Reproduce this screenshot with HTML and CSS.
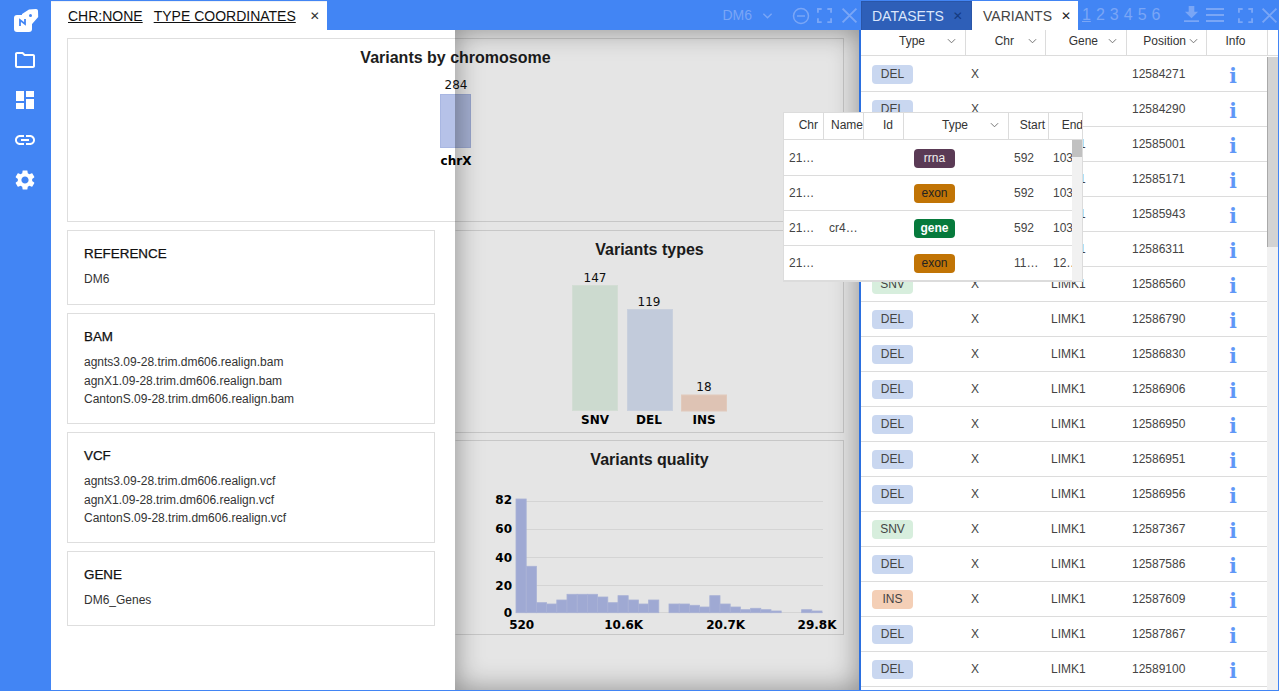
FILE: index.html
```html
<!DOCTYPE html>
<html lang="en">
<head>
<meta charset="utf-8">
<title>Variants</title>
<link rel="stylesheet" href="styles.css">
</head>
<body>
<div class="app">
  <nav class="sidebar">
    <svg class="logo" viewBox="0 0 26 26"><rect x="1" y="7" width="18" height="17" rx="3" fill="#fff"/><path fill="#fff" d="M9 6 16 1.500 23 1c1.200 0 2 .8 2 2l.2 6-7 8H8z"/><path fill="none" stroke="#4285f4" stroke-width="1.800" d="M7 18v-6l5 4v-5"/><circle cx="17.500" cy="7.500" r="1.500" fill="#4285f4"/></svg>
    <svg class="nav-icon" viewBox="0 0 24 24"><path d="M9.170 6l2 2H20v10H4V6h5.170M10 4H4c-1.100 0-1.990.9-1.990 2L2 18c0 1.100.9 2 2 2h16c1.100 0 2-.9 2-2V8c0-1.100-.9-2-2-2h-8l-2-2z"/></svg>
    <svg class="nav-icon" viewBox="0 0 24 24"><path d="M3 13h8V3H3v10zm0 8h8v-6H3v6zm10 0h8V11h-8v10zm0-18v6h8V3h-8z"/></svg>
    <svg class="nav-icon" viewBox="0 0 24 24"><path d="M3.900 12c0-1.710 1.390-3.100 3.100-3.100h4V7H7c-2.760 0-5 2.240-5 5s2.240 5 5 5h4v-1.900H7c-1.710 0-3.100-1.390-3.100-3.100zM8 13h8v-2H8v2zm9-6h-4v1.900h4c1.710 0 3.100 1.390 3.100 3.100s-1.390 3.100-3.100 3.100h-4V17h4c2.760 0 5-2.240 5-5s-2.240-5-5-5z"/></svg>
    <svg class="nav-icon" viewBox="0 0 24 24"><path d="M19.140 12.940c.04-.3.06-.61.06-.94 0-.32-.02-.64-.07-.94l2.030-1.580c.18-.14.23-.41.12-.61l-1.920-3.320c-.12-.22-.37-.29-.59-.22l-2.390.96c-.5-.38-1.030-.7-1.620-.94l-.36-2.540c-.04-.24-.24-.41-.48-.41h-3.840c-.24 0-.43.17-.47.41l-.36 2.540c-.59.24-1.130.57-1.620.94l-2.390-.96c-.22-.08-.47 0-.59.22L2.740 8.870c-.12.21-.08.47.12.61l2.030 1.580c-.05.3-.09.63-.09.94s.02.64.07.94l-2.030 1.580c-.18.14-.23.41-.12.61l1.920 3.320c.12.22.37.29.59.22l2.390-.96c.5.38 1.030.7 1.620.94l.36 2.540c.05.24.24.41.48.41h3.840c.24 0 .44-.17.47-.41l.36-2.540c.59-.24 1.130-.56 1.620-.94l2.390.96c.22.08.47 0 .59-.22l1.920-3.320c.12-.22.07-.47-.12-.61l-2.010-1.580zM12 15.600c-1.980 0-3.600-1.620-3.600-3.600s1.620-3.600 3.600-3.600 3.600 1.620 3.600 3.600-1.620 3.600-3.600 3.600z"/></svg>
  </nav>

  <section class="left-panel">
    <header class="panel-head">
      <div class="coord-tab">
        <span class="coord-link">CHR:NONE</span>
        <span class="coord-link">TYPE COORDINATES</span>
        <span class="tab-x">&#10005;</span>
      </div>
      <div class="head-tools">
        <span class="ref-name">DM6</span>
        <svg class="chev-light" viewBox="0 0 12 8"><path d="M1.500 1.500 6 6l4.500-4.500"/></svg>
        <svg class="tool tool-minus" viewBox="0 0 20 20"><circle cx="10" cy="10" r="7.500"/><path d="M6 10h8"/></svg>
        <svg class="tool tool-full" viewBox="0 0 16 16"><path d="M1 5V1h4M11 1h4v4M15 11v4h-4M5 15H1v-4"/></svg>
        <svg class="tool tool-close" viewBox="0 0 16 16"><path d="M1.500 1.500l13 13M14.500 1.500l-13 13"/></svg>
      </div>
    </header>
    <div class="left-body">
      <div class="chart-card chart-chrom">
        <h2 class="chart-title">Variants by chromosome</h2>
        <svg class="chart-svg chart-svg-chrom" viewBox="0 0 776 130">
          <text class="val" x="388" y="21">284</text>
          <rect x="372.500" y="26.500" width="30" height="53" fill="#b6c2e8" stroke="#a9b7e2"/>
          <text class="lab" x="388" y="97">chrX</text>
        </svg>
      </div>
      <div class="chart-card chart-types">
        <h2 class="chart-title">Variants types</h2>
        <svg class="chart-svg chart-svg-types" viewBox="0 0 387 155">
          <text class="val" x="139" y="13">147</text>
          <rect x="116.500" y="16.500" width="45" height="125" fill="#e4f3e7" stroke="#ebf7ed"/>
          <text class="val" x="193" y="37">119</text>
          <rect x="171.500" y="40.500" width="45" height="101" fill="#d9e2f4" stroke="#e0e8f7"/>
          <text class="val" x="248" y="122">18</text>
          <rect x="225.500" y="126" width="45" height="16" fill="#f8dac9" stroke="#fbe1d2"/>
          <text class="lab" x="139" y="155">SNV</text>
          <text class="lab" x="193" y="155">DEL</text>
          <text class="lab" x="248" y="155">INS</text>
        </svg>
      </div>
      <div class="chart-card chart-quality">
        <h2 class="chart-title">Variants quality</h2>
        <svg class="chart-svg chart-svg-quality" viewBox="0 0 387 163">
          <path class="grid" d="M60 31.500H367M60 59.500H367M60 87.500H367M60 115.500H367M60 142.500H367"/>
          <g class="hist">
            <rect x="60" y="29" width="10.200" height="113.700"/><rect x="70.200" y="96.300" width="10.200" height="46.400"/>
            <rect x="80.400" y="132.700" width="10.200" height="10"/><rect x="90.600" y="134" width="10.200" height="8.700"/>
            <rect x="100.800" y="130" width="10.200" height="12.700"/><rect x="111" y="124.300" width="10.200" height="18.400"/>
            <rect x="121.200" y="124.300" width="10.200" height="18.400"/><rect x="131.400" y="124.300" width="10.200" height="18.400"/>
            <rect x="141.600" y="127" width="10.200" height="15.700"/><rect x="151.800" y="132.700" width="10.200" height="10"/>
            <rect x="162" y="125.700" width="10.200" height="17"/><rect x="172.200" y="130" width="10.200" height="12.700"/>
            <rect x="182.400" y="134" width="10.200" height="8.700"/><rect x="192.600" y="130" width="10.200" height="12.700"/>
            <rect x="213" y="134" width="10.200" height="8.700"/><rect x="223.200" y="134" width="10.200" height="8.700"/>
            <rect x="233.400" y="135.300" width="10.200" height="7.400"/><rect x="243.600" y="137" width="10.200" height="5.700"/>
            <rect x="253.800" y="125.700" width="10.200" height="17"/><rect x="264" y="134" width="10.200" height="8.700"/>
            <rect x="274.200" y="137" width="10.200" height="5.700"/><rect x="284.400" y="139.700" width="10.200" height="3"/>
            <rect x="294.600" y="138.300" width="10.200" height="4.400"/><rect x="304.800" y="139.700" width="10.200" height="3"/>
            <rect x="315" y="141" width="10.200" height="1.700"/><rect x="345.600" y="139.700" width="10.200" height="3"/>
            <rect x="355.800" y="141" width="10.200" height="1.700"/>
          </g>
          <text class="lab lab-y" x="56" y="33.500">82</text>
          <text class="lab lab-y" x="56" y="63">60</text>
          <text class="lab lab-y" x="56" y="91.500">40</text>
          <text class="lab lab-y" x="56" y="119.500">20</text>
          <text class="lab lab-y" x="56" y="146.500">0</text>
          <text class="lab" x="65.700" y="159">520</text>
          <text class="lab" x="167.700" y="159">10.6K</text>
          <text class="lab" x="269.700" y="159">20.7K</text>
          <text class="lab" x="361" y="159">29.8K</text>
        </svg>
      </div>
      <div class="dim"></div>
      <aside class="drawer">
        <div class="info-card info-ref"><h3>REFERENCE</h3><p>DM6</p></div>
        <div class="info-card"><h3>BAM</h3><p>agnts3.09-28.trim.dm606.realign.bam</p><p>agnX1.09-28.trim.dm606.realign.bam</p><p>CantonS.09-28.trim.dm606.realign.bam</p></div>
        <div class="info-card"><h3>VCF</h3><p>agnts3.09-28.trim.dm606.realign.vcf</p><p>agnX1.09-28.trim.dm606.realign.vcf</p><p>CantonS.09-28.trim.dm606.realign.vcf</p></div>
        <div class="info-card info-ref"><h3>GENE</h3><p>DM6_Genes</p></div>
      </aside>
    </div>
  </section>

  <section class="right-panel">
    <header class="panel-head right-head">
      <div class="r-tab r-tab-dark">DATASETS <span class="tab-x">&#10005;</span></div>
      <div class="r-tab r-tab-white">VARIANTS <span class="tab-x">&#10005;</span></div>
      <div class="pages"><u>1</u><span>2</span><span>3</span><span>4</span><span>5</span><span>6</span></div>
      <svg class="tool tool-down" viewBox="0 0 16 18"><path class="solid" d="M5 0h6v6h4l-7 7-7-7h4zM0 15h16v2H0z"/></svg>
      <svg class="tool tool-menu" viewBox="0 0 18 14"><path class="solid" d="M0 0h18v2H0zM0 6h18v2H0zM0 12h18v2H0z"/></svg>
      <svg class="tool tool-full tool-full-r" viewBox="0 0 16 16"><path d="M1 5V1h4M11 1h4v4M15 11v4h-4M5 15H1v-4"/></svg>
      <svg class="tool tool-close tool-close-r" viewBox="0 0 16 16"><path d="M1.500 1.500l13 13M14.500 1.500l-13 13"/></svg>
    </header>
    <div class="table-wrap">
      <div class="vt-head">
        <div class="vc vc-type">Type<svg class="chev" viewBox="0 0 10 6"><path d="M1 1l4 4 4-4"/></svg></div>
        <div class="vc vc-chr">Chr<svg class="chev" viewBox="0 0 10 6"><path d="M1 1l4 4 4-4"/></svg></div>
        <div class="vc vc-gene">Gene<svg class="chev" viewBox="0 0 10 6"><path d="M1 1l4 4 4-4"/></svg></div>
        <div class="vc vc-pos">Position<svg class="chev" viewBox="0 0 10 6"><path d="M1 1l4 4 4-4"/></svg></div>
        <div class="vc vc-info">Info</div>
      </div>
      <div class="vt-body">
        <div class="vt-rows" id="rows"></div>
        <div class="v-scroll"><div class="v-thumb"></div></div>
      </div>
    </div>
  </section>

  <div class="popup">
    <div class="pt-head">
      <div class="pc pc-n">Chr</div><div class="pc pc-n pc-name">Name</div><div class="pc pc-n pc-id">Id</div>
      <div class="pc pc-type">Type<svg class="chev" viewBox="0 0 10 6"><path d="M1 1l4 4 4-4"/></svg></div>
      <div class="pc pc-n pc-start">Start</div><div class="pc pc-n pc-end">End</div>
    </div>
    <div class="pt-row"><span class="pd pd-chr">21…</span><span class="pd pd-name"></span><span class="pd pd-id"></span><span class="pd pd-type"><b class="ft ft-rrna">rrna</b></span><span class="pd pd-start">592</span><span class="pd pd-end">103</span></div>
    <div class="pt-row"><span class="pd pd-chr">21…</span><span class="pd pd-name"></span><span class="pd pd-id"></span><span class="pd pd-type"><b class="ft ft-exon">exon</b></span><span class="pd pd-start">592</span><span class="pd pd-end">103</span></div>
    <div class="pt-row"><span class="pd pd-chr">21…</span><span class="pd pd-name">cr4…</span><span class="pd pd-id"></span><span class="pd pd-type"><b class="ft ft-gene">gene</b></span><span class="pd pd-start">592</span><span class="pd pd-end">103</span></div>
    <div class="pt-row"><span class="pd pd-chr">21…</span><span class="pd pd-name"></span><span class="pd pd-id"></span><span class="pd pd-type"><b class="ft ft-exon">exon</b></span><span class="pd pd-start">11…</span><span class="pd pd-end">12…</span></div>
    <div class="p-scroll"><div class="p-thumb"></div></div>
  </div>
</div>
<script src="app.js"></script>
</body>
</html>
```

FILE: app.js
```js
var data = [
  ["DEL","",12584271],["DEL","",12584290],["DEL","LIMK1",12585001],["DEL","LIMK1",12585171],
  ["DEL","LIMK1",12585943],["DEL","LIMK1",12586311],["SNV","LIMK1",12586560],["DEL","LIMK1",12586790],
  ["DEL","LIMK1",12586830],["DEL","LIMK1",12586906],["DEL","LIMK1",12586950],["DEL","LIMK1",12586951],
  ["DEL","LIMK1",12586956],["SNV","LIMK1",12587367],["DEL","LIMK1",12587586],["INS","LIMK1",12587609],
  ["DEL","LIMK1",12587867],["DEL","LIMK1",12589100]
];
document.getElementById("rows").innerHTML = data.map(function (r) {
  return '<div class="vt-row"><span class="vd vd-type"><b class="vb vb-' + r[0].toLowerCase() + '">' + r[0] +
    '</b></span><span class="vd vd-chr">X</span><span class="vd vd-gene">' + r[1] +
    '</span><span class="vd vd-pos">' + r[2] + '</span><span class="vd vd-info">i</span></div>';
}).join("");
```

FILE: styles.css
```css
* { box-sizing: border-box; }
html, body { margin: 0; padding: 0; height: 100%; overflow: hidden; }
body { background: #4285f4; font-family: "Liberation Sans", Arial, sans-serif; color: #222; }

.app { position: relative; display: flex; width: 1279px; height: 691px; background: #4285f4; overflow: hidden; padding-bottom: 1px; }

.sidebar { width: 51px; flex: none; display: flex; flex-direction: column; align-items: center; padding: 8px 1px 0 0; gap: 16px; }
.logo { width: 26px; height: 26px; margin-left: 1px; margin-bottom: -2px; }
.nav-icon { width: 24px; height: 24px; fill: #fff; }

.panel-head { height: 30px; flex: none; display: flex; align-items: stretch; background: #4285f4; }

.left-panel { width: 808px; flex: none; display: flex; flex-direction: column; }
.coord-tab { width: 276px; margin-top: 1px; background: #fff; border-top: 1px solid #eef1f6; display: flex; align-items: center; padding: 0 0 0 17px; font-size: 14px; color: #111; white-space: nowrap; }
.coord-link { text-decoration: underline; margin-right: 11px; }
.tab-x { font-size: 12px; color: #333; font-family: "DejaVu Sans", sans-serif; }
.coord-tab .tab-x { margin-left: 3px; }
.head-tools { flex: 1; display: flex; align-items: center; justify-content: flex-end; padding-right: 1px; color: #7aa6f6; }
.ref-name { font-size: 14px; color: #7aa6f6; margin-right: 10px; }
.chev-light { width: 11px; height: 8px; fill: none; stroke: #7aa6f6; stroke-width: 1.500; margin-right: 18px; margin-top: 2px; }
.tool { fill: none; stroke: #7aa6f6; }
.tool-minus { width: 20px; height: 20px; stroke-width: 1.500; margin-right: 6px; margin-top: 2px; }
.tool-full { width: 15px; height: 15px; stroke-width: 2; margin-right: 9px; }
.tool-close { width: 17px; height: 17px; stroke-width: 1.800; }
.solid { fill: #7aa6f6; stroke: none; }

.left-body { position: relative; flex: 1; background: #fff; padding: 8px 15px 0 16px; display: flex; flex-direction: column; overflow: hidden; }
.chart-card { position: relative; background: #fff; border: 1px solid #dedede; flex: none; }
.chart-chrom { height: 184px; margin-bottom: 8px; }
.chart-types { height: 203px; margin-bottom: 7px; margin-left: 388px; border-left-color: transparent; }
.chart-quality { height: 195px; margin-left: 388px; border-left-color: transparent; }
.chart-title { margin: 0; font-size: 16px; font-weight: 700; text-align: center; color: #1d1d1d; line-height: 20px; padding-top: 9px; }
.chart-svg { display: block; overflow: visible; }
.chart-svg-chrom { width: 776px; height: 130px; }
.chart-svg-types { width: 387px; height: 155px; margin-top: 9px; }
.chart-svg-quality { width: 387px; height: 163px; }
.val { font: 12px "DejaVu Sans", sans-serif; fill: #111; text-anchor: middle; }
.lab { font: 700 12px "DejaVu Sans", sans-serif; fill: #000; text-anchor: middle; }
.lab-y { text-anchor: end; }
.grid { stroke: #ececec; stroke-width: 1; fill: none; }
.hist rect { fill: #b2bdeb; stroke: #bcc6ee; stroke-width: .8; }

.dim { position: absolute; left: 404px; right: 0; top: 0; bottom: 0; background: rgba(0, 0, 0, .1); box-shadow: inset 0 0 28px rgba(0, 0, 0, .4); }
.drawer { position: absolute; left: 0; top: 192px; width: 404px; bottom: 0; background: #fff; padding: 8px 20px 0 16px; display: flex; flex-direction: column; gap: 8px; }
.info-card { border: 1px solid #dedede; padding: 15px 16px 0; height: 111px; flex: none; }
.info-ref { height: 75px; }
.info-card h3 { margin: 0 0 8px; font-size: 13.400px; font-weight: 400; line-height: 16px; color: #111; -webkit-text-stroke: .25px #111; }
.info-card p { margin: 0; font-size: 12px; line-height: 18.500px; color: #333; }

.right-panel { flex: 1; min-width: 0; display: flex; flex-direction: column; }
.right-head { padding-left: 2px; align-items: stretch; position: relative; }
.r-tab { font-size: 14px; display: flex; align-items: center; white-space: nowrap; }
.r-tab-dark { width: 111px; padding-left: 10px; background: #2e5fb8; color: #dbe6fb; border: 1px solid #2a56a8; border-bottom: 0; margin-top: 1px; }
.r-tab-dark .tab-x { margin-left: 9px; color: #143a80; }
.r-tab-white { width: 106px; padding-left: 11px; background: #fff; color: #444; margin-top: 1px; }
.r-tab-white .tab-x { margin-left: 9px; color: #222; }
.pages { display: flex; gap: 5px; padding-left: 4px; align-items: center; font-size: 16px; color: #7aa6f6; width: 106px; flex: none; }
.tool-down { width: 15px; height: 17px; margin-top: 6px; margin-right: 7px; flex: none; }
.tool-menu { width: 18px; height: 14px; margin-top: 8px; margin-right: 14px; flex: none; }
.tool-full-r { margin: 8px 8px 0 0; flex: none; }
.tool-close-r { margin: 7px 0 0 0; flex: none; }

.table-wrap { flex: 1; min-height: 0; background: #fff; border-left: 2px solid #2a6fe0; border-right: 1px solid #4285f4; display: flex; flex-direction: column; overflow: hidden; }
.vt-head { display: flex; height: 26px; flex: none; border-bottom: 1px solid #dcdcdc; font-size: 12px; color: #333; margin-bottom: 1px; }
.vc { display: flex; align-items: center; justify-content: flex-end; border-right: 1px solid #dcdcdc; height: 25px; padding-bottom: 3px; }
.vc-type { width: 105px; padding-right: 9px; }
.vc-chr { width: 80px; padding-right: 8px; }
.vc-gene { width: 81px; padding-right: 9px; }
.vc-pos { width: 80px; padding-right: 8px; }
.vc-info { width: 61px; justify-content: center; padding-right: 3px; }
.chev { width: 9px; height: 6px; fill: none; stroke: #666; stroke-width: 1; flex: none; }
.vc-type .chev { margin-left: 22px; }
.vc-chr .chev { margin-left: 14px; }
.vc-gene .chev { margin-left: 10px; }
.vc-pos .chev { margin-left: 3px; }

.vt-body { flex: 1; min-height: 0; display: flex; overflow: hidden; }
.vt-rows { width: 406px; flex: none; }
.vt-row { display: flex; align-items: center; height: 35px; border-bottom: 1px solid #dcdcdc; font-size: 12px; color: #444; }
.vd { display: block; }
.vd-type { width: 105px; padding-left: 11px; }
.vd-chr { width: 80px; padding-left: 5px; }
.vd-gene { width: 81px; padding-left: 5px; }
.vd-pos { width: 80px; padding-left: 5px; }
.vd-info { width: 52px; text-align: center; font: 700 20px/20px "DejaVu Serif", "Liberation Serif", serif; color: #5f97f7; padding-top: 3px; }
.vb { display: inline-block; width: 41px; height: 19px; line-height: 19px; border-radius: 4px; text-align: center; font-weight: 400; font-size: 12px; color: #444; }
.vb-del { background: #c9d7f0; }
.vb-snv { background: #d7eedd; }
.vb-ins { background: #f4cfb6; }
.v-scroll { flex: 1; background: #f1f1f1; }
.v-thumb { height: 190px; background: #d3d3d3; border-left: 1px solid #a9a9a9; }

.popup { position: absolute; left: 783px; top: 112px; width: 300px; height: 170px; background: #fff; border: 1px solid #dcdcdc; overflow: hidden; font-size: 12px; color: #444; }
.pt-head { display: flex; height: 27px; border-bottom: 1px solid #dcdcdc; color: #333; margin-bottom: 1px; }
.pc { height: 26px; padding-bottom: 3px; display: flex; align-items: center; justify-content: flex-end; border-right: 1px solid #dcdcdc; white-space: nowrap; overflow: hidden; }
.pc-n { width: 40px; padding-right: 5px; flex: none; }
.pc-name { padding-right: 0; }
.pc-id { padding-right: 10px; }
.pc-start { padding-right: 3px; }
.pc-end { width: 34px; border-right: 0; padding-right: 0; }
.pc-type { width: 105px; padding-right: 9px; flex: none; }
.pc-type .chev { margin-left: 22px; }
.pt-row { display: flex; align-items: center; height: 35px; border-bottom: 1px solid #dcdcdc; width: 298px; }
.pd { display: block; flex: none; overflow: hidden; white-space: nowrap; }
.pd-chr { width: 40px; padding-left: 5px; }
.pd-name { width: 40px; padding-left: 5px; }
.pd-id { width: 40px; }
.pd-type { width: 104px; padding-left: 10px; }
.pd-start { width: 40px; padding-left: 6px; }
.pd-end { width: 34px; padding-left: 5px; }
.ft { display: inline-block; width: 41px; height: 19px; line-height: 19px; text-align: center; border-radius: 4px; font-weight: 400; font-size: 12px; }
.ft-rrna { background: #5a3a55; color: #f0f0f0; }
.ft-exon { background: #c17405; color: #222; }
.ft-gene { background: #067a3c; color: #fff; font-weight: 700; }
.p-scroll { position: absolute; left: 288px; top: 27px; width: 10px; bottom: 0; background: #f1f1f1; }
.p-thumb { height: 17px; background: #c1c1c1; }
```
